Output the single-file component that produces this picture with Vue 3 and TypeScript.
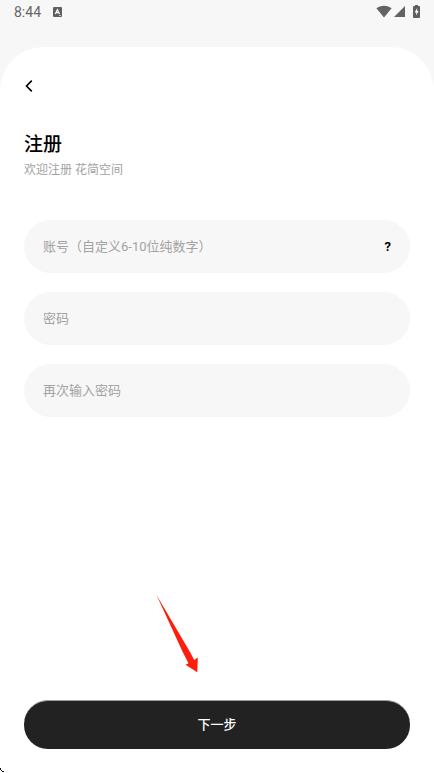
<script setup lang="ts">
import { ref } from 'vue'

interface Field {
  id: string
  label: string
  type: 'text' | 'password'
  hasHelp: boolean
}

const fields: Field[] = [
  { id: 'account', label: '账号（自定义6-10位纯数字）', type: 'text', hasHelp: true },
  { id: 'password', label: '密码', type: 'password', hasHelp: false },
  { id: 'confirm', label: '再次输入密码', type: 'password', hasHelp: false },
]

const values = ref<Record<string, string>>({ account: '', password: '', confirm: '' })
</script>

<template>
  <div class="screen">
    <header class="status">
      <time class="clock">8:44</time>
      <svg class="app-badge" width="9" height="10" viewBox="0 0 9 10" aria-hidden="true">
        <rect width="9" height="10" rx="1" fill="#5f5f5f" />
        <path d="M2.3 7 L4.4 2.6 L6.5 7 M3.1 5.6 H5.8" fill="none" stroke="#fff" stroke-width="1.2" />
        <path d="M6 8.5 H8" stroke="#ddd" stroke-width="0.8" />
      </svg>
      <div class="indicators">
        <svg width="16" height="13" viewBox="0 0 16 13" aria-hidden="true">
          <path d="M0.4 3.2 C4.6 -0.2 11.4 -0.2 15.6 3.2 L8 12.6 Z" fill="#636363" />
        </svg>
        <svg class="signal" width="11" height="11" viewBox="0 0 11 11" aria-hidden="true">
          <path d="M11 0 V11 H0 Z" fill="#636363" />
        </svg>
        <svg class="battery" width="7" height="13" viewBox="0 0 7 13" aria-hidden="true">
          <path d="M2 0 H5 V1 H6 Q7 1 7 2 V12 Q7 13 6 13 H1 Q0 13 0 12 V2 Q0 1 1 1 H2 Z" fill="#5f5f5f" />
          <path d="M4.2 3 L1.6 7.6 H3.2 V10.6 L5.6 6.1 H4.2 Z" fill="#fff" />
        </svg>
      </div>
    </header>

    <main class="sheet">
      <button class="back" type="button" aria-label="返回">
        <svg width="9" height="14" viewBox="0 0 9 14" aria-hidden="true">
          <path d="M7.8 1.6 L2.5 7 L7.8 12.4" fill="none" stroke="#000" stroke-width="1.6" />
        </svg>
      </button>
      <h1 class="title">注册</h1>
      <p class="subtitle">欢迎注册&nbsp;花简空间</p>

      <form class="form" @submit.prevent>
        <div class="fields">
          <div v-for="field in fields" :key="field.id" class="field">
            <input
              :id="field.id"
              v-model="values[field.id]"
              class="input"
              :type="field.type"
              :placeholder="field.label"
              :aria-label="field.label"
            />
            <button v-if="field.hasHelp" class="help" type="button">?</button>
          </div>
        </div>
        <button class="next" type="submit">下一步</button>
      </form>
    </main>

    <svg class="pointer" width="44" height="80" viewBox="0 0 44 80" aria-hidden="true">
      <path d="M0.5 1 L34 58 L38.2 66 L41.8 63.5 L41.3 78.3 L29.5 70.8 L32.5 69.2 L26.7 58 Z" fill="#ff1d0d" />
    </svg>
    <svg class="corner" width="4" height="5" viewBox="0 0 4 5" aria-hidden="true">
      <path d="M0 0 H1 V2 H0 Z M1 2 H2 V3 H1 Z M2 3 H4 V4 H2 Z" fill="#111" />
    </svg>
  </div>
</template>

<style>
body {
  margin: 0;
  background: #f7f7f7;
}
</style>

<style scoped>
.screen {
  position: relative;
  box-sizing: border-box;
  min-height: 100vh;
  display: flex;
  flex-direction: column;
  background: #f7f7f7;
  font-family: Roboto, "Noto Sans CJK SC", sans-serif;
}

.status {
  display: flex;
  align-items: center;
  height: 24px;
  margin-bottom: 23px;
  padding: 0 14px;
}

.clock {
  color: #666;
  font-size: 14px;
  line-height: 24px;
}

.app-badge {
  margin-left: 12px;
}

.indicators {
  display: flex;
  align-items: center;
  margin-left: auto;
  padding-bottom: 2px;
}

.signal {
  margin-left: 2px;
}

.battery {
  margin-left: 8px;
}

.sheet {
  flex: 1;
  display: flex;
  flex-direction: column;
  padding: 32px 24px 24px;
  border-radius: 44px 44px 0 0;
  background: #fff;
}

button {
  padding: 0;
  border: 0;
  background: none;
  font-family: inherit;
  cursor: pointer;
}

.back {
  display: flex;
  align-self: flex-start;
}

.title {
  margin: 38px 0 0;
  color: #000;
  font-size: 19px;
  font-weight: 500;
  line-height: 28px;
}

.subtitle {
  margin: 0;
  color: #a2a2a2;
  font-size: 12px;
  line-height: 22px;
}

.form {
  flex: 1;
  display: flex;
  flex-direction: column;
  margin-top: 39px;
}

.fields {
  display: flex;
  flex-direction: column;
  gap: 19px;
  margin-bottom: 32px;
}

.field {
  display: flex;
  align-items: center;
  height: 53px;
  padding: 0 19px;
  border-radius: 27px;
  background: #f7f7f7;
}

.input {
  flex: 1;
  min-width: 0;
  padding: 0;
  border: 0;
  outline: 0;
  background: transparent;
  color: #222;
  font-family: inherit;
  font-size: 13px;
  line-height: 20px;
}

.input::placeholder {
  color: #a2a2a2;
  opacity: 1;
}

.help {
  color: #000;
  font-size: 13px;
  font-weight: 700;
  line-height: 20px;
}

.next {
  height: 49px;
  margin-top: auto;
  padding-bottom: 3px;
  border-top: 1px solid #9aa09f;
  border-radius: 24px;
  background: #222;
  color: #fff;
  font-size: 13px;
  font-weight: 500;
}

.pointer {
  position: absolute;
  left: 156px;
  bottom: 99px;
  pointer-events: none;
}

.corner {
  position: absolute;
  left: 0;
  bottom: 0;
}
</style>
